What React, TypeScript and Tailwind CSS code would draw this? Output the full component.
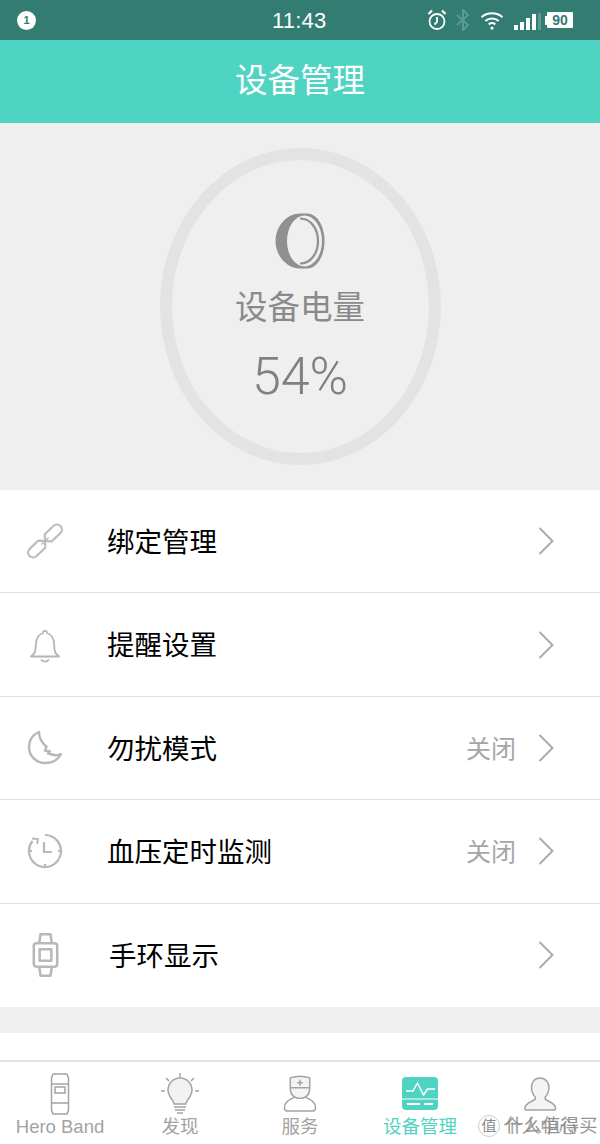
import type { ReactNode } from "react";

const cjk = "font-['Liberation_Sans','Noto_Sans_CJK_SC',sans-serif]";

const LinkIcon = () => (
  <svg className="overflow-visible" width="38" height="38" viewBox="0 0 38 38" fill="none" stroke="#bdbdbd" strokeWidth="2.200">
    <g transform="rotate(-44 19 19)">
      <path d="M14.500 14H2.500a5 5 0 0 0 0 10h12l9-10h12a5 5 0 0 1 0 10h-12z" />
      <path d="M14 19h10" strokeWidth="1.600" />
    </g>
  </svg>
);

const BellIcon = () => (
  <svg width="32" height="38" viewBox="0 0 32 38" fill="none" stroke="#b4b4b4" strokeWidth="1.800" strokeLinejoin="round">
    <path d="M2 30.500h28l-3.500-3.500c-1-2-1.200-5-1.400-9-.3-6-3.600-10-7.100-11 .2-3-4.200-3-4 0-3.500 1-6.800 5-7.100 11-.2 4-.4 7-1.400 9z" />
    <path d="M12 33.500c1.500 2.700 6.500 2.700 8 0" />
  </svg>
);

const MoonIcon = () => (
  <svg width="36" height="36" viewBox="0 0 36 36" fill="none" stroke="#b8b8b8" strokeWidth="2.400" strokeLinejoin="round">
    <path d="M12 2C5 5 2 11 2 17c0 9 7 16 16 16 7 0 13-3 16-9-3 1.500-6 1.500-9 .5l-4-1 2-2-5-1 1.500-3.500C15 13 12 8 12 2z" />
  </svg>
);

const ClockIcon = () => (
  <svg width="36" height="36" viewBox="0 0 36 36" fill="none" stroke="#b8b8b8" strokeWidth="2.200">
    <path d="M18 2a16 16 0 1 1-12.500 6" />
    <path d="M5 5.500l6 .5-1 5" strokeWidth="1.800" />
    <path d="M17 9v10h8" />
    <path d="M18 31v3M2 18h3M31 18h3" />
  </svg>
);

const WatchIcon = () => (
  <svg width="27" height="48" viewBox="0 0 30 50" fill="none" stroke="#b8b8b8" strokeWidth="2.800" strokeLinejoin="round">
    <path d="M8 12l1.500-10h11L22 12M8 38l1.500 10h11L22 38" />
    <rect x="2" y="12" width="26" height="26" rx="3" />
    <rect x="8.500" y="18.500" width="13" height="13" />
  </svg>
);

const RingIcon = () => (
  <svg width="50" height="56" viewBox="0 0 50 56">
    <path d="M25 .5h7C42 .5 49.500 13 49.500 28S42 55.500 32 55.500h-7C12 55.500.5 43 .5 28S12 .5 25 .5z" fill="#909090" />
    <ellipse cx="29.500" cy="28" rx="17.500" ry="25.500" fill="#efeff0" />
    <path d="M25 5.500C36 5.500 43 16 43 28S36 50.500 25 50.500" fill="none" stroke="#909090" strokeWidth="2.200" />
  </svg>
);

const Chevron = () => (
  <svg width="16" height="28" viewBox="0 0 16 28" fill="none" stroke="#ababab" strokeWidth="2">
    <path d="M1.500 1l13 13-13 13" />
  </svg>
);

const BandTab = () => (
  <svg width="20" height="42" viewBox="0 0 20 42" fill="none" stroke="#a3a3a3" strokeWidth="1.500">
    <path d="M3 1h14l1.500 4v32L17 41H3l-1.500-4V5z" />
    <path d="M1.500 11h17M1.500 30h17" />
    <rect x="5" y="14" width="10" height="6" />
  </svg>
);

const BulbTab = () => (
  <svg width="38" height="42" viewBox="0 0 38 42" fill="none" stroke="#a3a3a3" strokeWidth="1.500">
    <path d="M13 31c0-4-6-7-6-14a12 12 0 0 1 24 0c0 7-6 10-6 14z" fill="#f2f2f2" />
    <path d="M13 34h12M14 37h10M16 40h6" />
    <path d="M19 0v4M5 5l3 3M33 5l-3 3M0 18h4M34 18h4" />
  </svg>
);

const NurseTab = () => (
  <svg width="34" height="37" viewBox="0 0 34 38" fill="none" stroke="#a3a3a3" strokeWidth="1.500">
    <path d="M7 3c6-2 14-2 20 0v11c0 6-4 10-10 10S7 20 7 14z" fill="#f4f4f4" />
    <path d="M17 5v6M14 8h6M7 13h20" />
    <path d="M11 23C5 26 1 28 1 34c0 2 1 3 3 3h26c2 0 3-1 3-3 0-6-4-8-10-11" />
  </svg>
);

const DeviceTab = () => (
  <svg width="36" height="33" viewBox="0 0 36 33">
    <rect width="36" height="33" rx="4" fill="#4fd3c2" />
    <path d="M4 14h7l4.500-8 6 12 4-6H33" fill="none" stroke="#fff" strokeWidth="1.500" />
    <path d="M0 22h36" stroke="#fff" strokeWidth="1" />
    <path d="M5 27h13M22 27h9" stroke="#fff" strokeWidth="1.800" />
  </svg>
);

const PersonTab = () => (
  <svg width="36" height="34" viewBox="0 0 36 36" stroke="#a3a3a3" strokeWidth="1.600" fill="#f4f4f4">
    <path d="M18 1c6 0 9.500 5 9.500 10 0 5-2 8-4 10.500v2c3 2.500 11 4 11 9.500 0 1-1 2-2 2H4c-1 0-2-1-2-2 0-5.500 8-7 11-9.500v-2c-2-2.500-4-5.500-4-10.500C9 6 12 1 18 1z" />
  </svg>
);

const rows: { icon: ReactNode; label: string; value?: string; offset?: boolean }[] = [
  { icon: <LinkIcon />, label: "绑定管理" },
  { icon: <BellIcon />, label: "提醒设置" },
  { icon: <MoonIcon />, label: "勿扰模式", value: "关闭" },
  { icon: <ClockIcon />, label: "血压定时监测", value: "关闭" },
  { icon: <WatchIcon />, label: "手环显示", offset: true },
];

const tabs: { icon: ReactNode; label: string; active?: boolean }[] = [
  { icon: <BandTab />, label: "Hero Band" },
  { icon: <BulbTab />, label: "发现" },
  { icon: <NurseTab />, label: "服务" },
  { icon: <DeviceTab />, label: "设备管理", active: true },
  { icon: <PersonTab />, label: "个人中心" },
];

const StatusBar = () => (
  <div className="relative flex h-10 items-center justify-between bg-[#327c72] pl-[17px] pr-[27px] text-white">
    <div className="flex h-[19px] w-[19px] items-center justify-center rounded-full bg-white text-[11px] font-bold text-[#327c72]">
      1
    </div>
    <div className="absolute left-[272px] top-[9px] text-[22px] leading-6 tracking-[0.2px]">11:43</div>
    <div className="flex items-center">
      <svg width="20" height="22" viewBox="0 0 20 22" fill="none" stroke="#fff" strokeWidth="1.800">
        <circle cx="10" cy="12.500" r="7.500" />
        <path d="M10 8v5l-2.500 2.500" />
        <path d="M1.500 5L5 1.500M18.500 5L15 1.500" strokeWidth="2.200" />
      </svg>
      <svg className="ml-[9px]" width="14" height="22" viewBox="0 0 14 22" fill="none" stroke="#5d9a91" strokeWidth="2">
        <path d="M1 6l11 10-5 5V1l5 5L1 16" />
      </svg>
      <svg className="ml-[10px]" width="24" height="19" viewBox="0 0 24 20" fill="none" stroke="#fff" strokeWidth="2.200">
        <path d="M1 6.500c6-5.500 16-5.500 22 0M5 10.500c4-3.500 10-3.500 14 0M8.500 14c2-1.500 5-1.500 7 0" />
        <circle cx="12" cy="18" r="1.700" fill="#fff" stroke="none" />
      </svg>
      <div className="ml-[10px] mt-[2px] flex h-[17px] items-end gap-[2px]">
        <div className="h-[5px] w-1 bg-white" />
        <div className="h-2 w-1 bg-white" />
        <div className="h-3 w-1 bg-white" />
        <div className="h-4 w-1 bg-white" />
        <div className="h-[17px] w-[3px] bg-[#5d9a91]" />
      </div>
      <div className="ml-1 h-[9px] w-[2px] bg-white" />
      <div className="flex h-4 w-[26px] items-center justify-center rounded-[1px] bg-white text-[14px] font-bold leading-none text-[#327c72]">
        90
      </div>
    </div>
  </div>
);

const BatteryPanel = () => (
  <div className="flex h-[367px] items-start justify-center bg-[#efeff0] pt-[25px]">
    <div className="flex h-[317px] w-[281px] flex-col items-center rounded-[50%] border-[12px] border-[#e3e3e5] pt-[53px]">
      <RingIcon />
      <div className="mt-[16px] text-[32.500px] leading-[46px] text-[#8a8a8a]">设备电量</div>
      <div className="mt-[19px] font-['Roboto',sans-serif] text-[52px] font-light leading-[54px] text-[#808080]">54%</div>
    </div>
  </div>
);

const Row = ({ icon, label, value, offset }: (typeof rows)[number]) => (
  <div className="flex h-[103.400px] items-center border-b border-[#e2e2e2] bg-white pr-[46px] last:border-b-0">
    <div className="flex w-[90px] shrink-0 justify-center">{icon}</div>
    <div className={`mt-[3px] text-[27.500px] leading-none text-black ${offset ? "ml-[19px]" : "ml-[17px]"}`}>{label}</div>
    <div className="ml-auto flex items-center">
      {value && <span className="mr-[22px] mt-[3px] text-[25px] leading-none text-[#a6a6a6]">{value}</span>}
      <Chevron />
    </div>
  </div>
);

const TabBar = () => (
  <div className="relative flex h-[84px] border-t-2 border-[#e4e4e4] bg-white">
    {tabs.map((tab) => (
      <div key={tab.label} className="flex w-[120px] flex-col items-center pt-[11px]">
        <div className="flex h-[42px] items-center">{tab.icon}</div>
        <div className={`text-[18.500px] leading-6 ${tab.active ? "text-[#4fd3c2]" : "text-[#a3a3a3]"}`}>
          {tab.label}
        </div>
      </div>
    ))}
    {/* site watermark */}
    <div className="absolute left-[478px] top-[53px] flex items-center text-[#8a8a8a]">
      <div className="flex h-[22px] w-[22px] items-center justify-center rounded-full border border-[#cfcfcf] bg-white/70 text-[15px] leading-none">
        值
      </div>
      <div className="ml-[5px] text-[18.500px] leading-5 opacity-90">什么值得买</div>
    </div>
  </div>
);

export default function App() {
  return (
    <div className={`flex h-[1144px] w-[600px] flex-col overflow-hidden bg-white ${cjk}`}>
      <StatusBar />
      <div className="flex h-[83px] items-center justify-center bg-[#4fd3c2] text-[32.500px] leading-none text-white">
        设备管理
      </div>
      <BatteryPanel />
      <div>
        {rows.map((row) => (
          <Row key={row.label} {...row} />
        ))}
      </div>
      <div className="h-[26px] bg-[#efeff0]" />
      <div className="h-[27px] bg-white" />
      <TabBar />
    </div>
  );
}
